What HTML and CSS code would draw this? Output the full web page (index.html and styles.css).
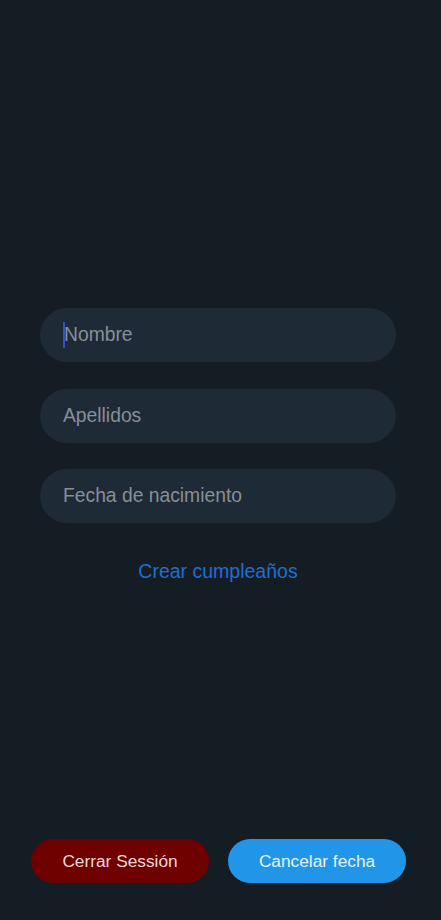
FILE: index.html
```html
<!DOCTYPE html>
<html lang="es">
<head>
<meta charset="utf-8">
<title>Crear cumpleaños</title>
<link rel="stylesheet" href="styles.css">
</head>
<body>
<div class="screen">
  <main class="form">
    <div class="field"><span class="caret"></span><span class="placeholder">Nombre</span></div>
    <div class="field"><span class="placeholder">Apellidos</span></div>
    <div class="field"><span class="placeholder">Fecha de nacimiento</span></div>
    <a class="link" href="#">Crear cumpleaños</a>
  </main>
  <footer class="actions">
    <button class="btn btn-red">Cerrar Sessión</button>
    <button class="btn btn-blue">Cancelar fecha</button>
  </footer>
</div>
</body>
</html>
```
FILE: styles.css
```css
* { box-sizing: border-box; }
html, body {
  margin: 0;
  padding: 0;
  background: #141d23;
}
body {
  font-family: "Liberation Sans", Arial, sans-serif;
}
.screen {
  height: 920px;
  display: flex;
  flex-direction: column;
}
.form {
  padding: 308px 45px 0 40px;
  display: flex;
  flex-direction: column;
  gap: 26.5px;
}
.field {
  height: 54px;
  border-radius: 27px;
  background: #1e2a36;
  display: flex;
  align-items: center;
  padding-left: 23px;
  font-size: 19.3px;
}
.placeholder {
  color: #878f97;
}
.caret {
  display: inline-block;
  width: 2px;
  height: 26px;
  background: #3350c4;
  margin-right: -1px;
}
.link {
  align-self: center;
  margin-top: 10px;
  font-size: 19.5px;
  color: #1f6ed3;
  text-decoration: none;
}
.actions {
  margin-top: auto;
  margin-bottom: 37px;
  padding: 0 35px 0 31px;
  display: flex;
  gap: 19px;
}
.btn {
  flex: 1;
  height: 44px;
  border: none;
  border-radius: 22px;
  font-family: "Liberation Sans", Arial, sans-serif;
  font-size: 17.3px;
  padding: 0;
}
.btn-red {
  background: #6e0000;
  color: #f2d6d6;
}
.btn-blue {
  background: #2196e8;
  color: #e6f4ff;
}
```
